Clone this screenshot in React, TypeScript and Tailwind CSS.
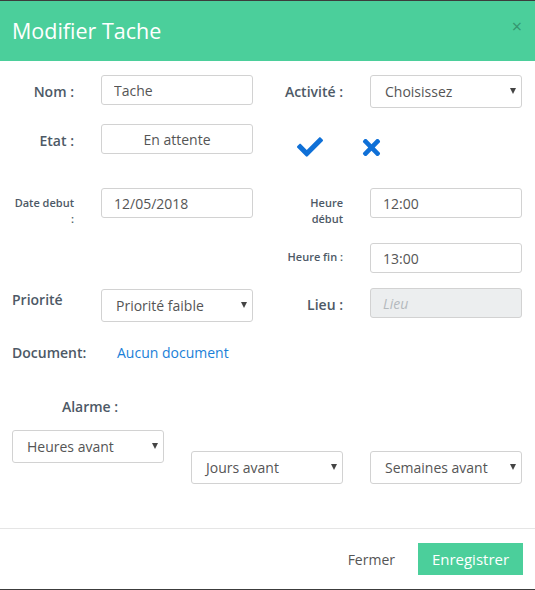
import { FaCheck, FaTimes } from "react-icons/fa";

const label = "text-[14px] font-semibold text-[#4d5966]";
const input =
  "h-[30px] w-[152px] rounded-[3px] border border-[#d2d2d2] px-[12px] text-[14px] text-[#555] outline-none";

function Select({ value, className }: { value: string; className?: string }) {
  return (
    <div
      className={`relative flex h-[33px] w-[152px] shrink-0 items-center rounded-[3px] border border-[#d2d2d2] bg-white pl-[14px] text-[14px] text-[#555] ${className ?? ""}`}
    >
      <span>{value}</span>
      <span className="absolute right-[5px] top-[12px] h-0 w-0 border-x-[3.5px] border-t-[6px] border-x-transparent border-t-[#444]" />
    </div>
  );
}

export default function App() {
  return (
    <div
      className="flex h-[590px] w-[535px] flex-col border-y border-[#3c3c3c] bg-white"
      style={{ fontFamily: '"Open Sans", sans-serif' }}
    >
      {/* Header */}
      <header className="flex h-[60px] shrink-0 items-center justify-between bg-[#4bcf9b] pl-[12px] pr-[13px]">
        <h1 className="text-[21.5px] text-white">Modifier Tache</h1>
        <span className="mb-[10px] text-[18px] leading-none text-[#35966f]">×</span>
      </header>

      <div className="flex-1 px-[12px]">
        {/* Nom / Activite */}
        <div className="mt-[14px] flex h-[33px] items-start">
          <div className={`flex h-[33px] w-[77px] shrink-0 items-center justify-end pr-[15px] ${label}`}>Nom :</div>
          <input className={`ml-[12px] bg-white ${input}`} defaultValue="Tache" />
          <div className={`flex h-[33px] w-[105px] shrink-0 items-center justify-end pr-[15px] ${label}`}>Activité :</div>
          <Select value="Choisissez" className="ml-[12px]" />
        </div>

        {/* Etat */}
        <div className="mt-[16px] flex h-[29px] items-start">
          <div className={`flex h-[33px] w-[77px] shrink-0 items-center justify-end pr-[15px] ${label}`}>Etat :</div>
          <div className={`ml-[12px] flex h-[29px] items-center justify-center bg-white ${input}`}>En attente</div>
          <div className="ml-[44px] mt-[10px] flex items-center gap-[36px] text-[#0f70d7]">
            <FaCheck size={26} />
            <FaTimes size={25} />
          </div>
        </div>

        {/* Dates */}
        <div className="mt-[35px] flex h-[30px] items-start">
          <div className="w-[77px] shrink-0 pr-[15px] pt-[7px] text-right text-[11px] font-semibold leading-[16px] text-[#4d5966]">
            Date debut
            <br />:
          </div>
          <input className={`ml-[12px] bg-white ${input}`} defaultValue="12/05/2018" />
          <div className="w-[105px] shrink-0 pr-[15px] pt-[7px] text-right text-[11px] font-semibold leading-[16px] text-[#4d5966]">
            Heure
            <br />
            début
          </div>
          <input className={`ml-[12px] bg-white ${input}`} defaultValue="12:00" />
        </div>

        <div className="mt-[25px] flex h-[29px] items-start">
          <div className="ml-[241px] flex h-[29px] w-[105px] shrink-0 items-center justify-end pr-[15px] text-[11px] font-semibold text-[#4d5966]">
            Heure fin :
          </div>
          <input className={`ml-[12px] h-[29px] bg-white ${input}`} defaultValue="13:00" />
        </div>

        {/* Priorite / Lieu */}
        <div className="mt-[16px] flex h-[33px] items-start">
          <div className={`w-[89px] shrink-0 pt-[1px] ${label}`}>Priorité</div>
          <Select value="Priorité faible" className="mt-[1px] h-[32px]" />
          <div className={`flex h-[30px] w-[105px] shrink-0 items-center justify-end pr-[15px] pt-[3px] ${label}`}>Lieu :</div>
          <input
            className={`ml-[12px] bg-[#eceeef] italic placeholder:text-[#b4b9bd] ${input}`}
            placeholder="Lieu"
            disabled
          />
        </div>

        {/* Document */}
        <div className="mt-[22px] flex h-[20px] items-center leading-[20px]">
          <div className={`w-[105px] shrink-0 ${label}`}>Document:</div>
          <a className="text-[14px] text-[#1a7fd8]">Aucun document</a>
        </div>

        {/* Alarme */}
        <div className={`mt-[34px] h-[20px] w-[156px] text-center leading-[20px] ${label}`}>Alarme :</div>
        <div className="mt-[13px] flex items-start">
          <Select value="Heures avant" className="w-[151px]" />
          <Select value="Jours avant" className="ml-[27px] mt-[21px] w-[151px]" />
          <Select value="Semaines avant" className="ml-[27px] mt-[21px]" />
        </div>
      </div>

      {/* Footer */}
      <footer className="flex h-[61px] shrink-0 items-center justify-end border-t border-[#e5e5e5] pr-[12px]">
        <button className="mr-[23px] text-[14px] text-[#555]">Fermer</button>
        <button className="h-[32px] w-[105px] bg-[#4bcf9b] text-[15px] text-white">Enregistrer</button>
      </footer>
    </div>
  );
}
